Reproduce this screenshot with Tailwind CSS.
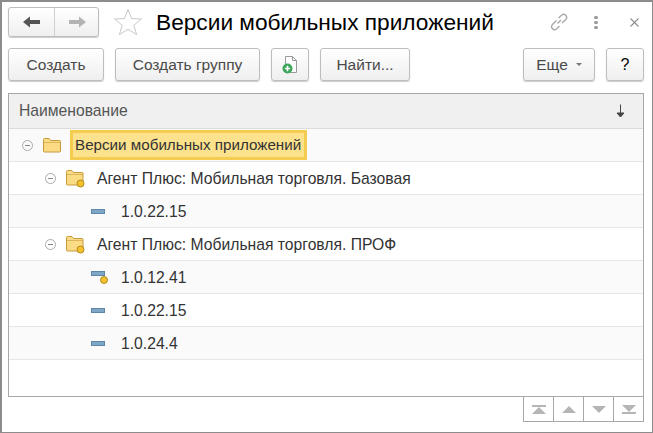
<!DOCTYPE html>
<html><head><meta charset="utf-8">
<script src="https://cdn.jsdelivr.net/npm/@tailwindcss/browser@4"></script>
</head>
<body class="m-0 bg-white">
<div class="w-[653px] h-[433px] box-border border-2 border-[#8c8c8c] border-r-[1px] border-b-[1px] bg-white font-['Liberation_Sans',Arial,sans-serif] text-[#333] overflow-hidden flex flex-col pl-[6px] pr-[8px]">
  <!-- title row -->
  <div class="flex items-center h-[30px] mt-[5px] shrink-0">
    <div class="flex w-[91px] h-[30px] rounded-[3px] border border-[#bdbdbd] bg-gradient-to-b from-white to-[#efefef] shadow-[0_1px_1px_#ccc]">
      <div class="w-[46px] flex items-center justify-center border-r border-[#d0d0d0]">
        <svg width="18" height="12" viewBox="0 0 18 12"><path d="M0 6 L7 0.5 V4 H17 V8 H7 V11.5 Z" fill="#555"/></svg>
      </div>
      <div class="flex-1 flex items-center justify-center">
        <svg width="18" height="12" viewBox="0 0 18 12"><path d="M18 6 L11 0.5 V4 H1 V8 H11 V11.5 Z" fill="#b4b4b4"/></svg>
      </div>
    </div>
    <svg class="ml-[14px]" width="30" height="28" viewBox="0 0 30 28"><path d="M15 1.5 L18.6 10.6 L28.6 11 L20.8 17.2 L23.6 26.6 L15 21.3 L6.4 26.6 L9.2 17.2 L1.4 11 L11.4 10.6 Z" fill="none" stroke="#c9c9c9" stroke-width="1"/></svg>
    <div class="ml-[13px] text-[22.7px] leading-[30px] text-black whitespace-nowrap">Версии мобильных приложений</div>
    <div class="flex-1"></div>
    <svg class="mr-[25px]" width="20" height="20" viewBox="0 0 20 20" fill="none" stroke="#a6a6a6" stroke-width="1.3"><path d="M8.5 11.5 L12 8 M7.5 8.5 L3.2 12.8 a3 3 0 0 0 4.2 4.2 L10.5 14 M9.5 6 L12.8 3 a3 3 0 0 1 4.2 4.2 L13 11"/></svg>
    <div class="flex flex-col gap-[2px] mr-[32px] w-[4px]">
      <div class="w-[4px] h-[3px] bg-[#9a9a9a] rounded-full"></div>
      <div class="w-[4px] h-[3px] bg-[#9a9a9a] rounded-full"></div>
      <div class="w-[4px] h-[3px] bg-[#9a9a9a] rounded-full"></div>
    </div>
    <svg class="mr-[5px]" width="9" height="9" viewBox="0 0 9 9" stroke="#8f8f8f" stroke-width="1.1"><path d="M0.5 0.5 L8.5 8.5 M8.5 0.5 L0.5 8.5"/></svg>
  </div>
  <!-- toolbar -->
  <div class="flex items-center h-[33px] mt-[11px] shrink-0 text-[15.5px] text-[#4a4a4a]">
    <div class="w-[96px] h-full flex items-center justify-center rounded-[3px] border border-[#bdbdbd] bg-gradient-to-b from-white to-[#efefef] shadow-[0_1px_1px_#ccc]">Создать</div>
    <div class="ml-[11px] w-[145px] h-full flex items-center justify-center rounded-[3px] border border-[#bdbdbd] bg-gradient-to-b from-white to-[#efefef] shadow-[0_1px_1px_#ccc]">Создать группу</div>
    <div class="ml-[11px] w-[38px] h-full flex items-center justify-center rounded-[3px] border border-[#bdbdbd] bg-gradient-to-b from-white to-[#efefef] shadow-[0_1px_1px_#ccc]">
      <svg width="16" height="18" viewBox="0 0 16 18"><path d="M3.5 0.5 H10.5 L14.5 4.5 V16.5 H3.5 Z M10.5 0.5 V4.5 H14.5" fill="#fff" stroke="#9a9a9a"/><circle cx="5.5" cy="12.5" r="5" fill="#3ba55c"/><path d="M5.5 9.8 V15.2 M2.8 12.5 H8.2" stroke="#fff" stroke-width="1.6"/></svg>
    </div>
    <div class="ml-[11px] w-[90px] h-full flex items-center justify-center rounded-[3px] border border-[#bdbdbd] bg-gradient-to-b from-white to-[#efefef] shadow-[0_1px_1px_#ccc]">Найти...</div>
    <div class="flex-1"></div>
    <div class="w-[72px] h-full flex items-center justify-center gap-[8px] rounded-[3px] border border-[#bdbdbd] bg-gradient-to-b from-white to-[#efefef] shadow-[0_1px_1px_#ccc]">Еще<span class="block w-0 h-0 border-x-[3px] border-x-transparent border-t-[3px] border-t-[#777]"></span></div>
    <div class="ml-[11px] w-[38px] h-full flex items-center justify-center rounded-[3px] border border-[#bdbdbd] bg-gradient-to-b from-white to-[#efefef] shadow-[0_1px_1px_#ccc] text-black text-[16px]">?</div>
  </div>
  <!-- table -->
  <div class="mt-[12px] h-[304px] shrink-0 border border-[#a8a8a8] flex flex-col text-[15.7px] text-[#333]">
    <div class="h-[35px] shrink-0 bg-[#f0f0f0] border-b border-[#dcdcdc] flex items-center pl-[10px] pr-[18px] justify-between text-[#555]">
      <span>Наименование</span>
      <svg width="9" height="14" viewBox="0 0 9 14"><path d="M4.5 0.5 V12 M1 9 L4.5 13 L8 9 Z" stroke="#444" fill="#444" stroke-width="1"/></svg>
    </div>
    <!-- row: root -->
    <div class="h-[33px] shrink-0 bg-[#fafafa] border-b border-[#e6e6e6] flex items-center pl-[13px] box-border">
      <div class="w-[11px] h-[11px] rounded-full border border-[#aaa] flex items-center justify-center"><div class="w-[5px] h-px bg-[#888]"></div></div>
      <svg class="ml-[9px]" width="20" height="16" viewBox="0 0 20 16"><path d="M1.5 14 V2.5 a1 1 0 0 1 1-1 H7 L8.5 3.5 H17.5 a1 1 0 0 1 1 1 V14 a1 1 0 0 1-1 1 H2.5 a1 1 0 0 1-1-1 Z" fill="#fbdc84" stroke="#c79a3e"/><path d="M2 5.5 H18" stroke="#c79a3e" stroke-width="0.6"/></svg>
      <div class="ml-[8px] w-[237px] h-[30px] box-border border-[3px] border-[#f4cd50] bg-[#fce28d] pl-[2px] flex items-center text-[#333] text-[15.2px] whitespace-nowrap">Версии мобильных приложений</div>
    </div>
    <!-- row -->
    <div class="h-[33px] shrink-0 border-b border-[#e6e6e6] flex items-center pl-[36px]">
      <div class="w-[11px] h-[11px] rounded-full border border-[#aaa] flex items-center justify-center"><div class="w-[5px] h-px bg-[#888]"></div></div>
      <svg class="ml-[9px]" width="20" height="19" viewBox="0 0 20 19"><path d="M1.5 15 V2.5 a1 1 0 0 1 1-1 H7 L8.5 3.5 H17 a1 1 0 0 1 1 1 V15 a1 1 0 0 1-1 1 H2.5 a1 1 0 0 1-1-1 Z" fill="#fbdc84" stroke="#c79a3e"/><path d="M2 5.5 H18" stroke="#c79a3e" stroke-width="0.6"/><circle cx="15.5" cy="14.5" r="3.5" fill="#f2c12e" stroke="#b58a1c"/></svg>
      <div class="ml-[12px] pt-[2px] whitespace-nowrap">Агент Плюс: Мобильная торговля. Базовая</div>
    </div>
    <div class="h-[33px] shrink-0 bg-[#fafafa] border-b border-[#e6e6e6] flex items-center pl-[82px]">
      <div class="w-[14px] h-[5px] bg-[#7ea6c6] border border-[#5d86a8]"></div>
      <div class="ml-[16px] pt-[2px]">1.0.22.15</div>
    </div>
    <div class="h-[33px] shrink-0 border-b border-[#e6e6e6] flex items-center pl-[36px]">
      <div class="w-[11px] h-[11px] rounded-full border border-[#aaa] flex items-center justify-center"><div class="w-[5px] h-px bg-[#888]"></div></div>
      <svg class="ml-[9px]" width="20" height="19" viewBox="0 0 20 19"><path d="M1.5 15 V2.5 a1 1 0 0 1 1-1 H7 L8.5 3.5 H17 a1 1 0 0 1 1 1 V15 a1 1 0 0 1-1 1 H2.5 a1 1 0 0 1-1-1 Z" fill="#fbdc84" stroke="#c79a3e"/><path d="M2 5.5 H18" stroke="#c79a3e" stroke-width="0.6"/><circle cx="15.5" cy="14.5" r="3.5" fill="#f2c12e" stroke="#b58a1c"/></svg>
      <div class="ml-[12px] pt-[2px] whitespace-nowrap">Агент Плюс: Мобильная торговля. ПРОФ</div>
    </div>
    <div class="h-[33px] shrink-0 bg-[#fafafa] border-b border-[#e6e6e6] flex items-center pl-[82px]">
      <svg width="18" height="16" viewBox="0 0 18 16"><rect x="0.5" y="2.5" width="13" height="4" fill="#7ea6c6" stroke="#5d86a8"/><circle cx="13" cy="11" r="3.5" fill="#f2c12e" stroke="#b58a1c"/></svg>
      <div class="ml-[12px] pt-[2px]">1.0.12.41</div>
    </div>
    <div class="h-[33px] shrink-0 border-b border-[#e6e6e6] flex items-center pl-[82px]">
      <div class="w-[14px] h-[5px] bg-[#7ea6c6] border border-[#5d86a8]"></div>
      <div class="ml-[16px] pt-[2px]">1.0.22.15</div>
    </div>
    <div class="h-[33px] shrink-0 bg-[#fafafa] border-b border-[#e6e6e6] flex items-center pl-[82px]">
      <div class="w-[14px] h-[5px] bg-[#7ea6c6] border border-[#5d86a8]"></div>
      <div class="ml-[16px] pt-[2px]">1.0.24.4</div>
    </div>
  </div>
  <!-- pager -->
  <div class="flex justify-end shrink-0">
    <div class="flex h-[25px] border border-t-0 border-[#a8a8a8]">
      <div class="w-[30px] flex items-center justify-center border-r border-[#a8a8a8]"><svg width="14" height="9" viewBox="0 0 14 9" fill="#b5b5b5"><rect x="0" y="0" width="14" height="2"/><path d="M7 2 L14 9 H0 Z"/></svg></div>
      <div class="w-[30px] flex items-center justify-center border-r border-[#a8a8a8]"><svg width="14" height="7" viewBox="0 0 14 7" fill="#b5b5b5"><path d="M7 0 L14 7 H0 Z"/></svg></div>
      <div class="w-[30px] flex items-center justify-center border-r border-[#a8a8a8]"><svg width="14" height="7" viewBox="0 0 14 7" fill="#b5b5b5"><path d="M7 7 L14 0 H0 Z"/></svg></div>
      <div class="w-[29px] flex items-center justify-center"><svg width="14" height="9" viewBox="0 0 14 9" fill="#b5b5b5"><rect x="0" y="7" width="14" height="2"/><path d="M7 7 L14 0 H0 Z"/></svg></div>
    </div>
  </div>
</div>
</body></html>
